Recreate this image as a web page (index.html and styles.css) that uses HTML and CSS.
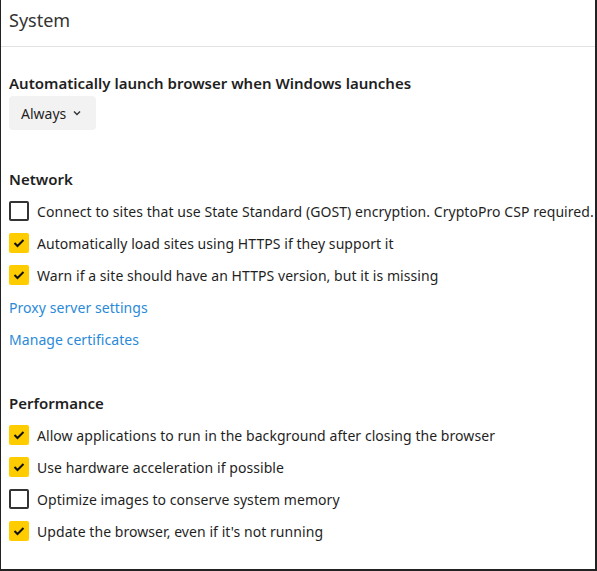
FILE: index.html
```html
<!DOCTYPE html>
<html>
<head>
<meta charset="utf-8">
<link rel="stylesheet" href="styles.css">
</head>
<body>
<div class="frame">
  <div class="header">System</div>
  <div class="section first">
    <div class="title">Automatically launch browser when Windows launches</div>
    <div class="select">Always <svg class="chev" width="8" height="6" viewBox="0 0 8 6"><path d="M1 1.5 L4 4.5 L7 1.5" fill="none" stroke="#333" stroke-width="1.4"/></svg></div>
  </div>
  <div class="section net">
    <div class="row title">Network</div>
    <div class="row"><span class="box"></span>Connect to sites that use State Standard (GOST) encryption. CryptoPro CSP required.</div>
    <div class="row"><span class="box on"><svg width="12" height="10" viewBox="0 0 12 10"><path d="M1.5 5 L4.5 8 L10.5 2" fill="none" stroke="#111" stroke-width="2"/></svg></span>Automatically load sites using HTTPS if they support it</div>
    <div class="row"><span class="box on"><svg width="12" height="10" viewBox="0 0 12 10"><path d="M1.5 5 L4.5 8 L10.5 2" fill="none" stroke="#111" stroke-width="2"/></svg></span>Warn if a site should have an HTTPS version, but it is missing</div>
    <div class="row link">Proxy server settings</div>
    <div class="row link">Manage certificates</div>
  </div>
  <div class="section perf">
    <div class="row title">Performance</div>
    <div class="row"><span class="box on"><svg width="12" height="10" viewBox="0 0 12 10"><path d="M1.5 5 L4.5 8 L10.5 2" fill="none" stroke="#111" stroke-width="2"/></svg></span>Allow applications to run in the background after closing the browser</div>
    <div class="row"><span class="box on"><svg width="12" height="10" viewBox="0 0 12 10"><path d="M1.5 5 L4.5 8 L10.5 2" fill="none" stroke="#111" stroke-width="2"/></svg></span>Use hardware acceleration if possible</div>
    <div class="row"><span class="box"></span>Optimize images to conserve system memory</div>
    <div class="row"><span class="box on"><svg width="12" height="10" viewBox="0 0 12 10"><path d="M1.5 5 L4.5 8 L10.5 2" fill="none" stroke="#111" stroke-width="2"/></svg></span>Update the browser, even if it's not running</div>
  </div>
</div>
</body>
</html>
```
FILE: styles.css
```css
html, body {
  margin: 0;
  padding: 0;
  background: #fff;
}
.frame {
  box-sizing: border-box;
  width: 597px;
  height: 571px;
  border-left: 1px solid #222;
  border-right: 2px solid #222;
  border-bottom: 2px solid #222;
  font-family: "Noto Sans", "Open Sans", sans-serif;
  font-size: 14px;
  color: #1f1f1f;
  overflow: hidden;
}
.header {
  height: 46px;
  border-bottom: 1px solid #e2e2e2;
  padding-left: 8px;
  font-size: 18px;
  line-height: 40px;
  color: #333;
}
.section {
  padding-left: 8px;
  display: flex;
  flex-direction: column;
}
.section.first {
  padding-top: 24px;
}
.section.first .title {
  line-height: 24px;
  height: 24px;
}
.title {
  font-weight: 600;
  font-size: 15px;
}
.select {
  margin-top: 1px;
  width: 87px;
  height: 34px;
  box-sizing: border-box;
  background: #f2f2f2;
  border-radius: 4px;
  padding-left: 12px;
  display: flex;
  align-items: center;
  gap: 7px;
}
.section.net {
  padding-top: 33px;
}
.section.perf {
  padding-top: 32px;
}
.row {
  height: 32px;
  display: flex;
  align-items: center;
  white-space: nowrap;
  letter-spacing: 0.06px;
}
.row.title {
  letter-spacing: 0;
}
.box {
  box-sizing: border-box;
  width: 20px;
  height: 20px;
  border: 2px solid #333;
  border-radius: 2px;
  margin-right: 8px;
  flex: none;
  display: flex;
  align-items: center;
  justify-content: center;
}
.box.on {
  background: #ffcc00;
  border-color: #ffcc00;
}
.link {
  color: #2a8ad8;
}
```
